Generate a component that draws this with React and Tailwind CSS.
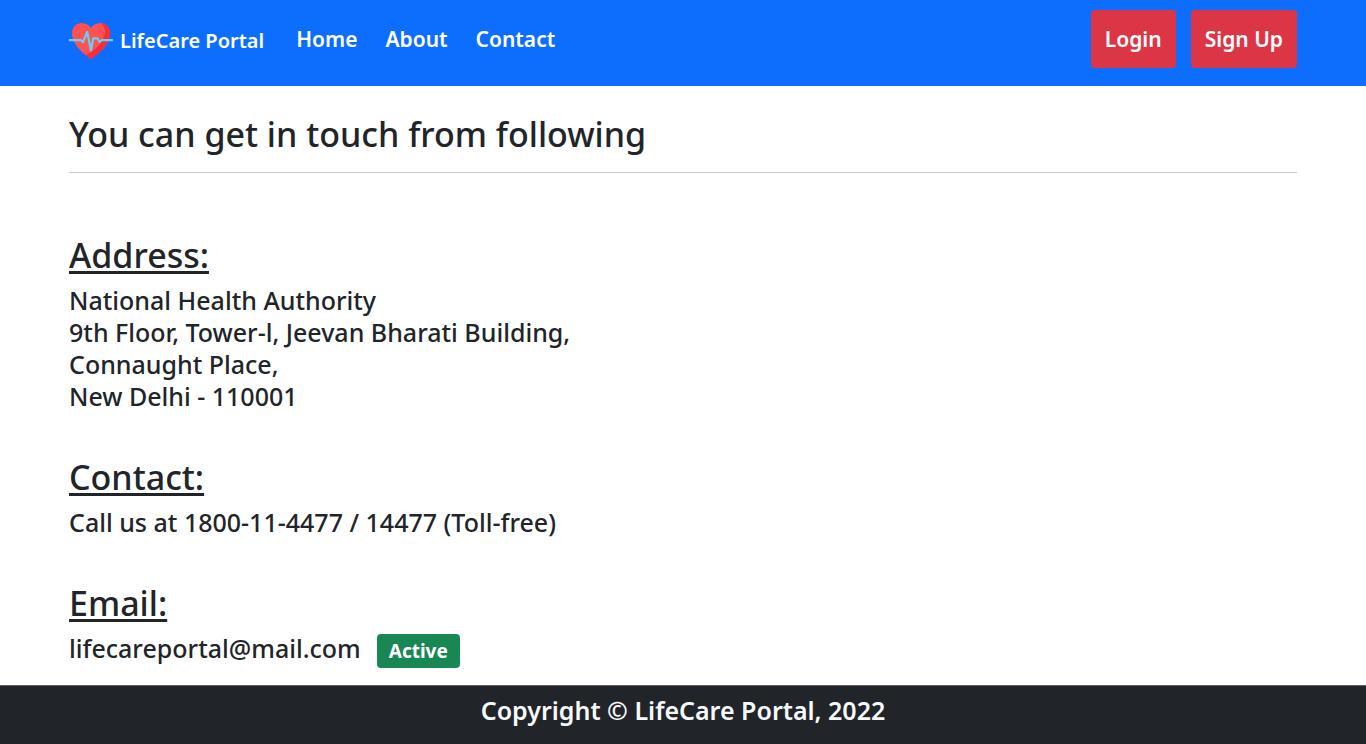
import React from "react";

function HeartLogo() {
  return (
    <svg viewBox="0 0 44 38" className="h-[38px] w-11 shrink-0" aria-hidden="true">
      <path
        d="M22 37.300C18 33.500 3 24.500 3 11.500C3 5 7.500 1 12.800 1C17 1 20.200 3.200 22 6C23.800 3.200 27 1 31.200 1C36.500 1 41 5 41 11.500C41 24.500 26 33.500 22 37.300Z"
        fill="#ff5052"
      />
      <path
        d="M31.200 1C36.500 1 41 5 41 11.500C41 24.500 26 33.500 22 37.300C20.500 35.900 18.800 34.600 17 33C28 27.500 36 18 36 9C36 5.500 34 2.200 31.200 1Z"
        fill="#fb2b3a"
      />
      <path
        d="M0 18.200H12L14 20.200L18.200 10L22 28.500L24.300 16.300H28.300L30.700 20L32.500 18.200H44"
        fill="none"
        stroke="#62d3f5"
        strokeWidth="2.2"
        strokeLinejoin="round"
      />
    </svg>
  );
}

const links = ["Home", "About", "Contact"];
const actions = ["Login", "Sign Up"];

function Navbar() {
  return (
    <header className="bg-[#0d6efd] px-[69px] pt-[10px] pb-[18px] text-[21px] leading-8 font-semibold text-white">
      <nav className="flex items-center justify-between">
        <div className="flex items-center">
          <a href="#" className="mr-8 flex items-center gap-[7px] pt-[3px] text-[20px]">
            <HeartLogo />
            LifeCare Portal
          </a>
          <ul className="flex items-center gap-7">
            {links.map((label) => (
              <li key={label}>
                <a href="#">{label}</a>
              </li>
            ))}
          </ul>
        </div>
        <div className="flex items-center gap-[15px]">
          {actions.map((label) => (
            <button key={label} type="button" className="h-[58px] rounded bg-[#dc3545] px-[14px]">
              {label}
            </button>
          ))}
        </div>
      </nav>
    </header>
  );
}

function Section({ title, children }) {
  return (
    <section>
      <h2 className="mb-[7px] text-[34px] leading-[43px] underline decoration-[3px] underline-offset-[3px]">{title}</h2>
      <div className="text-[25px] leading-8">{children}</div>
    </section>
  );
}

export default function App() {
  return (
    <div className="flex min-h-screen flex-col bg-white font-['Noto_Sans','Open_Sans',sans-serif] font-medium text-[#212529]">
      <Navbar />
      <main className="grow px-[69px] pt-[27px] pb-4">
        <h1 className="text-[34px] leading-[43px]">You can get in touch from following</h1>
        <hr className="mt-4 mb-[61px] border-[#c8c9ca]" />
        <div className="flex flex-col gap-11">
          <Section title="Address:">
            <address className="not-italic">
              National Health Authority
              <br />
              9th Floor, Tower-l, Jeevan Bharati Building,
              <br />
              Connaught Place,
              <br />
              New Delhi - 110001
            </address>
          </Section>
          <Section title="Contact:">
            <p>Call us at 1800-11-4477 / 14477 (Toll-free)</p>
          </Section>
          <Section title="Email:">
            <p className="flex items-baseline gap-4">
              lifecareportal@mail.com
              <span className="rounded bg-[#198754] px-3 py-px text-[19px] font-bold text-white">Active</span>
            </p>
          </Section>
        </div>
      </main>
      <footer className="border-t border-[#5f6265] bg-[#212529] pt-2 pb-[18px] text-center text-[25px] leading-8 font-semibold text-[#f8f9fa]">
        Copyright © LifeCare Portal, 2022
      </footer>
    </div>
  );
}
